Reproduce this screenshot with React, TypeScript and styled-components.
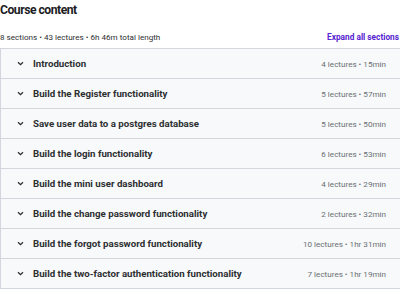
import React from "react";
import styled, { createGlobalStyle } from "styled-components";

const Global = createGlobalStyle`
  html, body { margin: 0; padding: 0; background: #fff; }
  body { font-family: Roboto, "Noto Sans", sans-serif; color: #2d2f31; overflow: hidden; }
`;

const Page = styled.div`
  width: 400px;
  height: 291px;
  overflow: hidden;
`;

const Title = styled.h2`
  margin: 0;
  padding-top: 1px;
  font-size: 12.2px;
  line-height: 16px;
  font-weight: 700;
  letter-spacing: -0.5px;
  color: #1c1d1f;
  transform: scaleY(1.12);
  transform-origin: left center;
`;

const MetaBar = styled.div`
  display: flex;
  justify-content: space-between;
  align-items: center;
  margin-top: 13px;
  height: 14px;
  margin-bottom: 4px;
`;

const Meta = styled.span`
  font-size: 8.1px;
  color: #2d2f31;
`;

const Expand = styled.span`
  font-size: 8.3px;
  font-weight: 700;
  color: #5624d0;
  margin-right: 1px;
`;

const List = styled.div`
  border-top: 1px solid #d1d7dc;
  border-left: 1px solid #d1d7dc;
  margin-right: -4px;
`;

const Row = styled.div`
  display: flex;
  align-items: center;
  height: 29px;
  background: #f7f9fa;
  border-bottom: 1px solid #d1d7dc;
  padding: 0 18px 0 16px;
`;

const Chevron = styled.svg`
  width: 7px;
  height: 5px;
  flex: none;
  margin-right: 9px;
`;

const SectionTitle = styled.span`
  flex: 1;
  font-size: 9.7px;
  font-weight: 700;
  color: #2d2f31;
`;

const Info = styled.span`
  font-size: 8.1px;
  color: #6a6f73;
`;

const sections = [
  ["Introduction", "4 lectures • 15min"],
  ["Build the Register functionality", "5 lectures • 57min"],
  ["Save user data to a postgres database", "5 lectures • 50min"],
  ["Build the login functionality", "6 lectures • 53min"],
  ["Build the mini user dashboard", "4 lectures • 29min"],
  ["Build the change password functionality", "2 lectures • 32min"],
  ["Build the forgot password functionality", "10 lectures • 1hr 31min"],
  ["Build the two-factor authentication functionality", "7 lectures • 1hr 19min"],
];

export default function App() {
  return (
    <Page>
      <Global />
      <Title>Course content</Title>
      <MetaBar>
        <Meta>8 sections • 43 lectures • 6h 46m total length</Meta>
        <Expand>Expand all sections</Expand>
      </MetaBar>
      <List>
        {sections.map(([t, i]) => (
          <Row key={t}>
            <Chevron viewBox="0 0 7 5">
              <path d="M1 1.2 L3.5 3.7 L6 1.2" fill="none" stroke="#2d2f31" strokeWidth="1.3" />
            </Chevron>
            <SectionTitle>{t}</SectionTitle>
            <Info>{i}</Info>
          </Row>
        ))}
      </List>
    </Page>
  );
}
